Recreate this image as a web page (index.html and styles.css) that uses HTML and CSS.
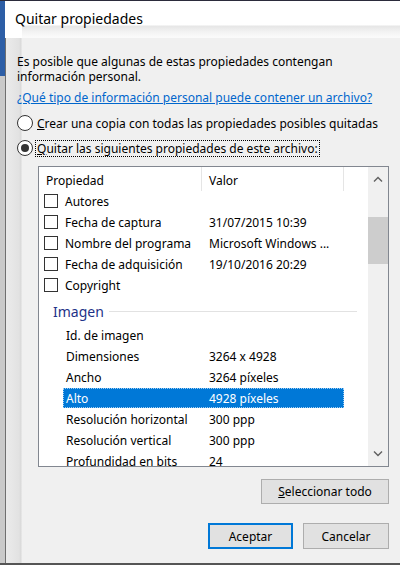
FILE: index.html
```html
<!DOCTYPE html>
<html lang="es">
<head>
<meta charset="utf-8">
<title>Quitar propiedades</title>
<link rel="stylesheet" href="styles.css">
</head>
<body>
<div class="window">
  <div class="titlebar">Quitar propiedades</div>
  <div class="content">
    <p class="intro">Es posible que algunas de estas propiedades contengan<br>información personal.</p>
    <a class="link" href="#">¿Qué tipo de información personal puede contener un archivo?</a>
    <div class="radio-row first">
      <span class="radio"></span>
      <span class="radio-label"><u>C</u>rear una copia con todas las propiedades posibles quitadas</span>
    </div>
    <div class="radio-row">
      <span class="radio checked"></span>
      <span class="radio-label focus"><u>Q</u>uitar las siguientes propiedades de este archivo:</span>
    </div>

    <div class="listbox">
      <div class="list">
        <div class="header">
          <div class="hcol name-col">Propiedad</div>
          <div class="hcol val-col">Valor</div>
        </div>
        <div class="row check"><span class="chk"></span><span class="name">Autores</span><span class="val"></span></div>
        <div class="row check"><span class="chk"></span><span class="name">Fecha de captura</span><span class="val">31/07/2015 10:39</span></div>
        <div class="row check"><span class="chk"></span><span class="name">Nombre del programa</span><span class="val">Microsoft Windows ...</span></div>
        <div class="row check"><span class="chk"></span><span class="name">Fecha de adquisición</span><span class="val">19/10/2016 20:29</span></div>
        <div class="row check"><span class="chk"></span><span class="name">Copyright</span><span class="val"></span></div>
        <div class="group"><span class="group-title">Imagen</span><span class="group-line"></span></div>
        <div class="row plain"><span class="name">Id. de imagen</span><span class="val"></span></div>
        <div class="row plain"><span class="name">Dimensiones</span><span class="val">3264 x 4928</span></div>
        <div class="row plain"><span class="name">Ancho</span><span class="val">3264 píxeles</span></div>
        <div class="row plain selected"><span class="name">Alto</span><span class="val">4928 píxeles</span></div>
        <div class="row plain"><span class="name">Resolución horizontal</span><span class="val">300 ppp</span></div>
        <div class="row plain"><span class="name">Resolución vertical</span><span class="val">300 ppp</span></div>
        <div class="row plain"><span class="name">Profundidad en bits</span><span class="val">24</span></div>
      </div>
      <div class="scrollbar">
        <div class="arrow">
          <svg width="10" height="6" viewBox="0 0 10 6"><polyline points="1,5.5 5,1.5 9,5.5" fill="none" stroke="#606060" stroke-width="1.4"/></svg>
        </div>
        <div class="track"><div class="thumb"></div></div>
        <div class="arrow">
          <svg width="10" height="6" viewBox="0 0 10 6"><polyline points="1,0.5 5,4.5 9,0.5" fill="none" stroke="#606060" stroke-width="1.4"/></svg>
        </div>
      </div>
    </div>

    <div class="btn-row select-row">
      <button class="btn wide"><u>S</u>eleccionar todo</button>
    </div>
    <div class="btn-row bottom-row">
      <button class="btn default">Aceptar</button>
      <button class="btn">Cancelar</button>
    </div>
  </div>
</div>
</body>
</html>
```

FILE: styles.css
```css
* { box-sizing: border-box; }

html, body {
  margin: 0;
  padding: 0;
}

body {
  width: 400px;
  height: 565px;
  overflow: hidden;
  font-family: "Noto Sans", "Open Sans", sans-serif;
  font-size: 12px;
  color: #000;
  background: #f0f0f0;
}

.window {
  width: 400px;
  height: 565px;
  border-top: 1px solid #2b2b3b;
  border-bottom: 2px solid #555555;
  display: flex;
  flex-direction: column;
  background:
    linear-gradient(#2d5ea6, #2d5ea6) no-repeat 0 0 / 5px 75px,
    linear-gradient(to right, #cacaca 0 5px, #707070 5px 6px, #ebebeb 6px, #e2e2e2 19px, #d9d9d9 21px, #f0f0f0 22px);
}

.titlebar {
  height: 37px;
  flex: none;
  padding: 8px 0 0 15px;
  font-size: 14px;
  line-height: 20px;
  color: #000;
  background:
    linear-gradient(#2d5ea6, #2d5ea6) no-repeat 0 0 / 5px 100%,
    linear-gradient(#ffffff, #ffffff) no-repeat 5px 0 / 17px 100%,
    linear-gradient(to bottom, #ffffff 0, #ffffff 24px, #e6e6e6 25px, #f3f3f3 31px, #fafafa 36px);
}

.content {
  flex: 1;
  display: flex;
  flex-direction: column;
  padding-left: 17px;
}

.intro {
  margin: 16px 0 0;
  line-height: 15px;
}

.link {
  display: block;
  margin-top: 6px;
  line-height: 15px;
  color: #0066cc;
  text-decoration: underline;
}

.radio-row {
  display: flex;
  align-items: center;
  height: 18px;
  margin-top: 7px;
}

.radio-row.first {
  margin-top: 9px;
}

.radio {
  width: 16px;
  height: 16px;
  border: 1px solid #333333;
  border-radius: 50%;
  background: #ffffff;
  flex: none;
  display: flex;
  align-items: center;
  justify-content: center;
  margin-right: 4px;
}

.radio.checked::after {
  content: "";
  width: 8px;
  height: 8px;
  border-radius: 50%;
  background: #333333;
}

.radio-label {
  line-height: 15px;
  white-space: nowrap;
}

.radio-label.focus {
  outline: 1px dotted #000;
  outline-offset: 0;
  margin-left: -1px;
  padding-left: 1px;
  padding-right: 1px;
}

/* List box */
.listbox {
  margin: 9px 0 0 21px;
  width: 351px;
  height: 301px;
  border: 1px solid #828790;
  background: #ffffff;
  display: flex;
  flex: none;
  overflow: hidden;
}

.list {
  flex: 1;
  overflow: hidden;
}

.header {
  display: flex;
  height: 24px;
  align-items: stretch;
}

.hcol {
  display: flex;
  align-items: center;
  padding: 2px 0 0 7px;
  border-right: 1px solid #e5e5e5;
}

.name-col { width: 163px; }
.val-col { width: 142px; }

.row {
  display: flex;
  align-items: center;
  height: 21px;
  white-space: nowrap;
}

.row.check {
  padding-left: 5px;
}

.chk {
  width: 14px;
  height: 14px;
  border: 1px solid #333333;
  background: #ffffff;
  margin-right: 7px;
  margin-top: -2px;
  flex: none;
}

.row.check .name {
  width: 144px;
}

.row.plain {
  margin-left: 24px;
  width: 281px;
  padding-left: 3px;
}

.row.plain .name {
  width: 143px;
}

.row.selected {
  background: #0078d7;
  color: #ffffff;
  outline: 1px dotted #9fcdf3;
  outline-offset: -1px;
  height: 20px;
  margin-bottom: 1px;
}

.group {
  display: flex;
  align-items: center;
  height: 29px;
  padding: 1px 11px 0 14px;
}

.group-title {
  font-size: 14px;
  color: #1e3287;
}

.group-line {
  flex: 1;
  height: 1px;
  background: #e2e2e2;
  margin-left: 5px;
}

/* Scrollbar */
.scrollbar {
  width: 20px;
  flex: none;
  background: #f0f0f0;
  display: flex;
  flex-direction: column;
}

.arrow {
  height: 24px;
  display: flex;
  align-items: center;
  justify-content: center;
  flex: none;
}

.track {
  flex: 1;
  padding-top: 26px;
}

.thumb {
  height: 47px;
  background: #cdcdcd;
}

/* Buttons */
.btn-row {
  display: flex;
  justify-content: flex-end;
  gap: 10px;
  padding-right: 11px;
}

.select-row { margin-top: 12px; }
.bottom-row { margin-top: 19px; }

.btn {
  font-family: "Noto Sans", "Open Sans", sans-serif;
  font-size: 12px;
  color: #000;
  background: #e1e1e1;
  border: 1px solid #adadad;
  height: 25px;
  padding: 0;
  margin: 0;
}

.btn.wide { width: 128px; }

.bottom-row .btn {
  width: 86px;
  height: 26px;
}

.btn.default {
  width: 85px;
  border: 2px solid #0078d7;
}
```
